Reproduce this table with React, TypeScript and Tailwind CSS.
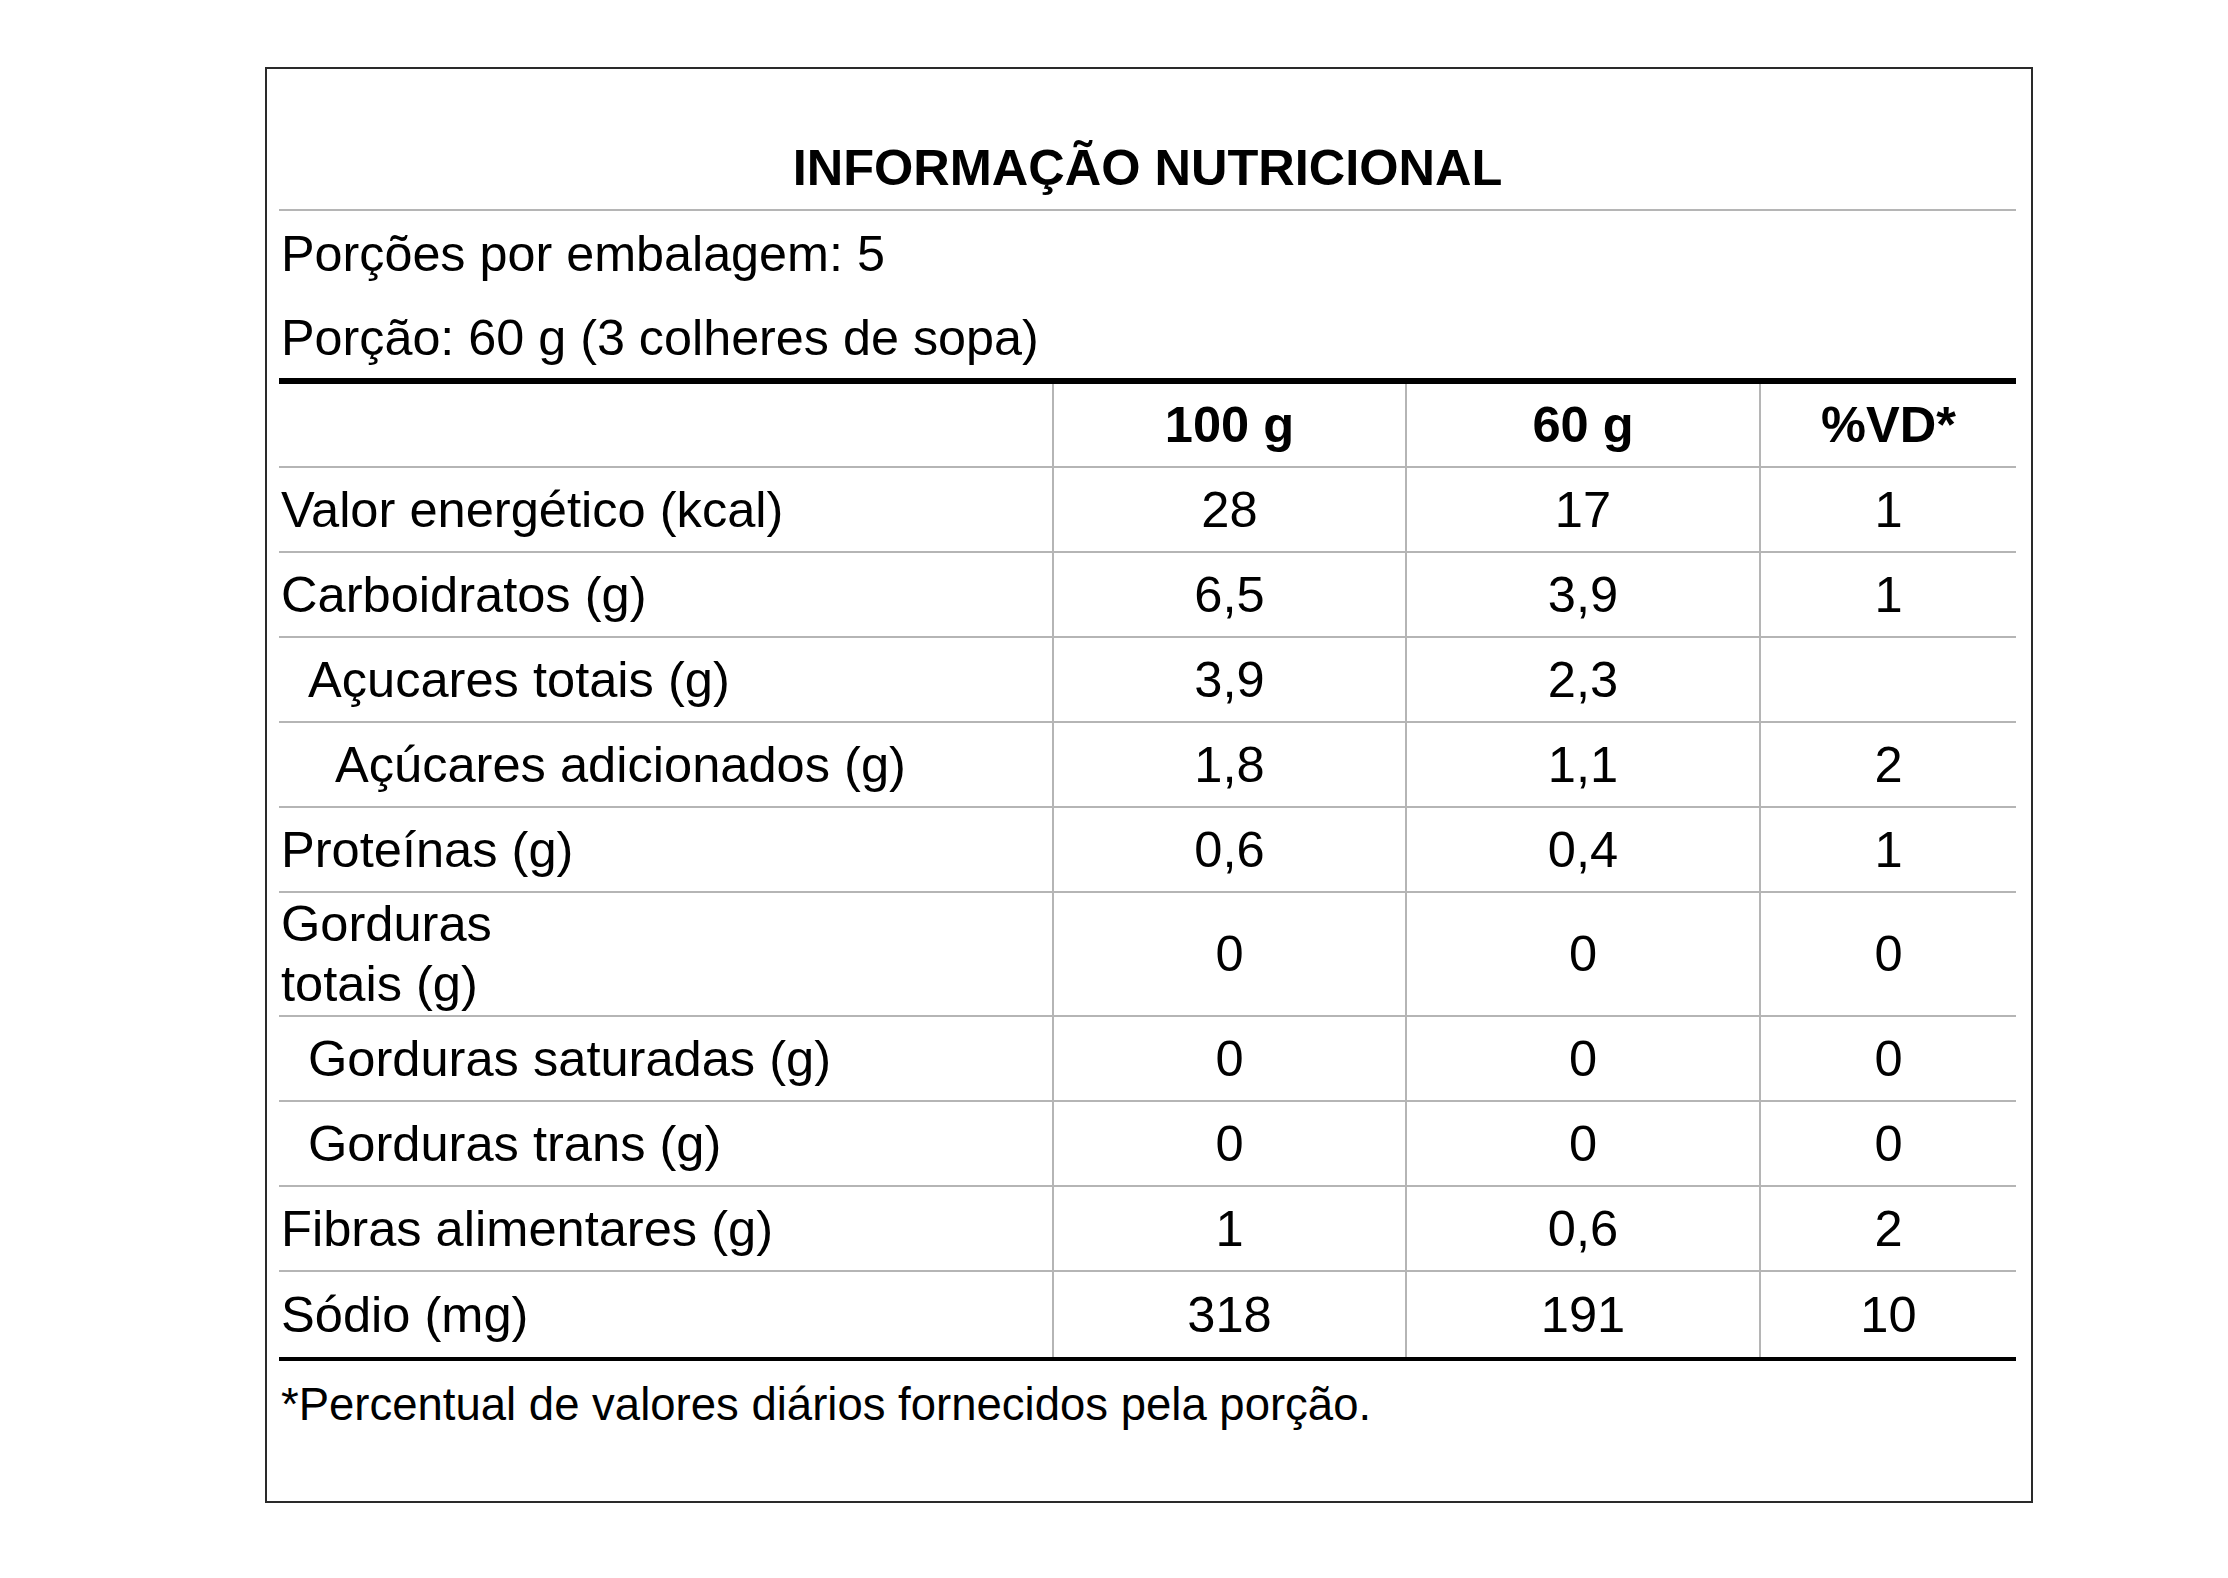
import React from "react";

type Row = {
  label: React.ReactNode;
  indent?: 0 | 1 | 2;
  a: string;
  b: string;
  vd: string;
  tall?: boolean;
};

const rows: Row[] = [
  { label: "Valor energético (kcal)", a: "28", b: "17", vd: "1" },
  { label: "Carboidratos (g)", a: "6,5", b: "3,9", vd: "1" },
  { label: "Açucares totais (g)", indent: 1, a: "3,9", b: "2,3", vd: "" },
  { label: "Açúcares adicionados (g)", indent: 2, a: "1,8", b: "1,1", vd: "2" },
  { label: "Proteínas (g)", a: "0,6", b: "0,4", vd: "1" },
  {
    label: (
      <>
        Gorduras
        <br />
        totais (g)
      </>
    ),
    a: "0",
    b: "0",
    vd: "0",
    tall: true,
  },
  { label: "Gorduras saturadas (g)", indent: 1, a: "0", b: "0", vd: "0" },
  { label: "Gorduras trans (g)", indent: 1, a: "0", b: "0", vd: "0" },
  { label: "Fibras alimentares (g)", a: "1", b: "0,6", vd: "2" },
  { label: "Sódio (mg)", a: "318", b: "191", vd: "10" },
];

const indentClass = ["pl-[2px]", "pl-[29px]", "pl-[56px]"];

export default function App() {
  return (
    <div className="min-h-screen bg-white pt-[67px] pl-[265px] font-['Liberation_Sans',Arial,sans-serif] text-black">
      <div className="w-[1768px] h-[1436px] border-2 border-[#2a2a2a] pl-[12px] pr-[15px]">
        <h1 className="pt-[69px] pb-[11px] border-b-2 border-[#b5b5b5] text-center text-[50.5px] leading-[60px] font-bold">
          INFORMAÇÃO NUTRICIONAL
        </h1>
        <div className="h-[85px] flex items-center pl-[2px] text-[50.3px] leading-[60px]">
          Porções por embalagem: 5
        </div>
        <div className="h-[82px] pt-[12px] pl-[2px] text-[50.3px] leading-[60px]">
          Porção: 60 g (3 colheres de sopa)
        </div>

        <div className="border-t-[6px] border-b-4 border-black grid grid-cols-[773px_353px_354px_257px] text-[50.6px] leading-[60px]">
          <div className="h-[84px] border-b-2 border-[#b5b5b5]" />
          <div className="h-[84px] border-b-2 border-l-2 border-[#b5b5b5] flex items-center justify-center font-bold">
            100 g
          </div>
          <div className="h-[84px] border-b-2 border-l-2 border-[#b5b5b5] flex items-center justify-center font-bold">
            60 g
          </div>
          <div className="h-[84px] border-b-2 border-l-2 border-[#b5b5b5] flex items-center justify-center font-bold">
            %VD*
          </div>

          {rows.map((r, i) => {
            const last = i === rows.length - 1;
            const h = r.tall ? "h-[124px]" : "h-[85px]";
            const line = last ? "" : "border-b-2";
            return (
              <React.Fragment key={i}>
                <div className={`${h} ${line} border-[#b5b5b5] flex items-center ${indentClass[r.indent ?? 0]}`}>
                  <span>{r.label}</span>
                </div>
                <div className={`${h} ${line} border-l-2 border-[#b5b5b5] flex items-center justify-center`}>
                  {r.a}
                </div>
                <div className={`${h} ${line} border-l-2 border-[#b5b5b5] flex items-center justify-center`}>
                  {r.b}
                </div>
                <div className={`${h} ${line} border-l-2 border-[#b5b5b5] flex items-center justify-center`}>
                  {r.vd}
                </div>
              </React.Fragment>
            );
          })}
        </div>

        <p className="pt-[14px] pl-[2px] text-[45.5px] leading-[60px]">
          *Percentual de valores diários fornecidos pela porção.
        </p>
      </div>
    </div>
  );
}
